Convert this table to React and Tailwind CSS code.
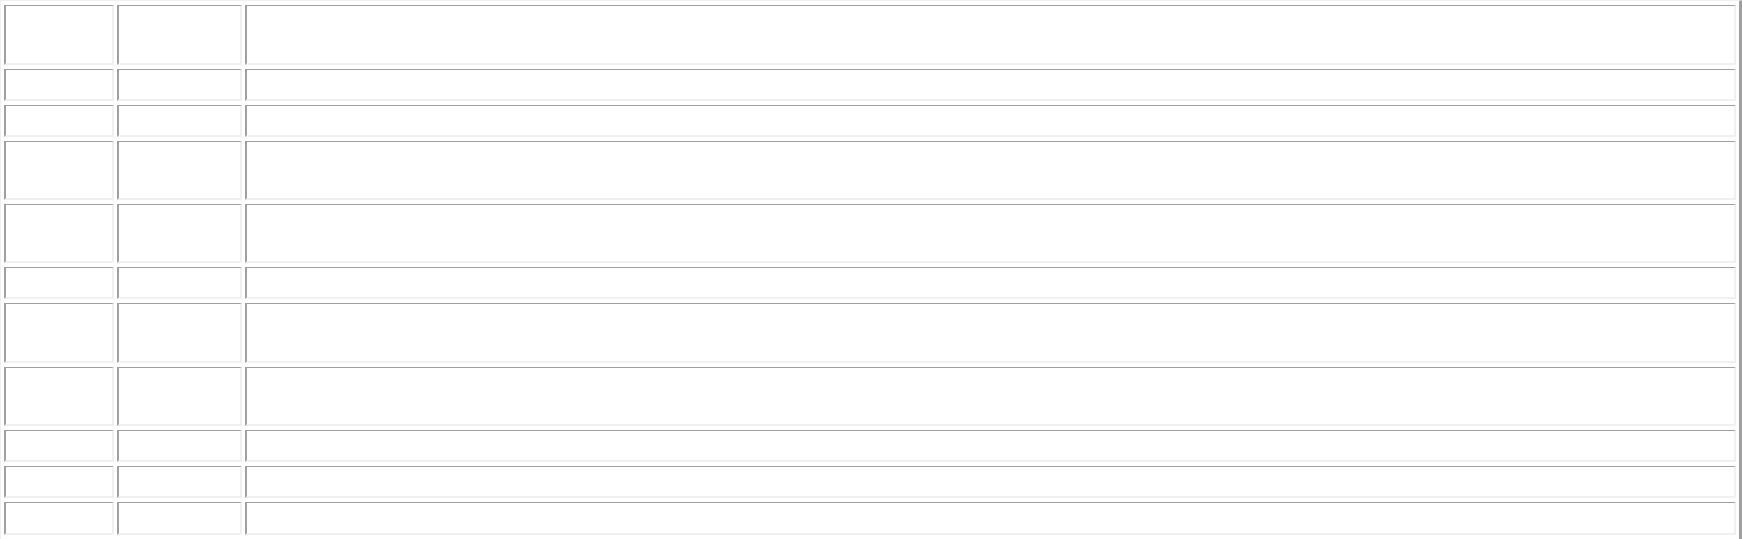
import React from 'react';

const rows = [60, 32, 32, 59, 59, 32, 60, 59, 32, 32, 33];

const cell = 'p-0 border-t border-l-2 border-r-2 border-b-2 border-t-[#a0a0a0] border-l-[#a0a0a0] border-r-[#f0f0f0] border-b-[#f0f0f0] bg-white';

export default function App() {
  return (
    <div className="w-[1742px] h-[539px] bg-white overflow-hidden">
      <table className="w-full border-separate border-spacing-x-[3px] border-spacing-y-[4px] border-t border-l border-r-[3px] border-b border-t-[#f0f0f0] border-l-[#f0f0f0] border-r-[#a0a0a0] border-b-[#a0a0a0]">
        <tbody>
          {rows.map((h, i) => (
            <tr key={i} style={{ height: h }}>
              <td className={`${cell} w-[110px]`}></td>
              <td className={`${cell} w-[125px]`}></td>
              <td className={cell}></td>
            </tr>
          ))}
        </tbody>
      </table>
    </div>
  );
}
